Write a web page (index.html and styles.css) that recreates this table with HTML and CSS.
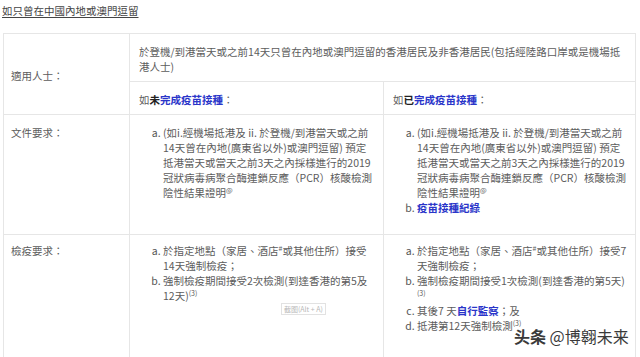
FILE: index.html
```html
<!DOCTYPE html>
<html lang="zh-Hant">
<head>
<meta charset="utf-8">
<link rel="stylesheet" href="styles.css">
</head>
<body>
<div class="page">
  <p class="title">如只曾在中國內地或澳門逗留</p>
  <table class="grid">
    <colgroup><col class="c1"><col class="c2"><col class="c3"></colgroup>
    <tr>
      <td class="label mid" rowspan="2">適用人士：</td>
      <td class="head" colspan="2">於登機/到港當天或之前14天只曾在內地或澳門逗留的香港居民及非香港居民(包括經陸路口岸或是機場抵<br>港人士)</td>
    </tr>
    <tr>
      <td class="head">如<b class="dark">未</b><span class="link">完成疫苗接種</span>：</td>
      <td class="head">如<b class="dark">已</b><span class="link">完成疫苗接種</span>：</td>
    </tr>
    <tr>
      <td class="label">文件要求：</td>
      <td class="body">
        <ol class="items">
          <li>(如i.經機場抵港及 ii. 於登機/到港當天或之前<br>14天曾在內地(廣東省以外)或澳門逗留) 預定<br>抵港當天或當天之前3天之內採樣進行的2019<br>冠狀病毒病聚合酶連鎖反應（PCR）核酸檢測<br>陰性結果證明<sup>@</sup></li>
        </ol>
      </td>
      <td class="body">
        <ol class="items">
          <li>(如i.經機場抵港及 ii. 於登機/到港當天或之前<br>14天曾在內地(廣東省以外)或澳門逗留) 預定<br>抵港當天或當天之前3天之內採樣進行的2019<br>冠狀病毒病聚合酶連鎖反應（PCR）核酸檢測<br>陰性結果證明<sup>@</sup></li>
          <li><span class="link">疫苗接種紀錄</span></li>
        </ol>
      </td>
    </tr>
    <tr>
      <td class="label low">檢疫要求：</td>
      <td class="body low">
        <ol class="items">
          <li>於指定地點（家居、酒店<sup>#</sup>或其他住所）接受<br>14天強制檢疫；</li>
          <li>強制檢疫期間接受2次檢測(到達香港的第5及<br>12天)<sup>(3)</sup></li>
        </ol>
      </td>
      <td class="body low">
        <ol class="items">
          <li>於指定地點（家居、酒店<sup>#</sup>或其他住所）接受7<br>天強制檢疫；</li>
          <li>強制檢疫期間接受1次檢測(到達香港的第5天)<br><sup>(3)</sup></li>
          <li>其後7 天<span class="link">自行監察</span>；及</li>
          <li>抵港第12天強制檢測<sup>(3)</sup></li>
        </ol>
      </td>
    </tr>
  </table>
  <div class="capture">截图(Alt + A)</div>
  <div class="mark"><span class="brand">头条</span> @博翱未来</div>
</div>
</body>
</html>
```

FILE: styles.css
```css
html, body {
  margin: 0;
  padding: 0;
  background: #ffffff;
}
body {
  font-family: "Noto Sans CJK TC", "Noto Sans", sans-serif;
  font-size: 10.5px;
  line-height: 15px;
  color: #5c5c5c;
  overflow: hidden;
}
.page {
  position: relative;
  width: 640px;
  height: 357px;
  padding: 3px 0 0 3px;
  box-sizing: border-box;
}
.title {
  margin: 0 0 15px -1px;
  color: #444;
  text-decoration: underline;
  text-underline-offset: 2px;
  line-height: 15px;
}
.grid {
  border-collapse: collapse;
  table-layout: fixed;
  width: 632px;
}
.c1 { width: 126px; }
.c2 { width: 254px; }
.c3 { width: 252px; }
.grid td {
  border: 1px solid #e6e6e6;
  vertical-align: top;
  padding: 10px 8px 8px 8px;
}
.grid td.label {
  padding-left: 7px;
}
.grid td.mid {
  vertical-align: middle;
}
.grid td.head {
  padding: 10px 8px 7px 9px;
}
.grid td.low {
  padding-top: 8px;
  height: 112px;
}
.dark {
  color: #222;
  font-weight: 700;
}
.link {
  color: #2a35c9;
  font-weight: 700;
}
.items {
  list-style: lower-alpha;
  margin: 0 0 11px 0;
  padding: 0 0 0 25px;
  white-space: nowrap;
}
.items li::marker {
  color: #555;
}
sup {
  font-size: 7px;
  line-height: 1;
  vertical-align: 4px;
}
.capture {
  position: absolute;
  left: 281px;
  top: 303px;
  padding: 0 2px;
  border: 1px solid #e2e2e2;
  font-size: 7px;
  line-height: 10px;
  color: #b8b8b8;
  background: #fff;
}
.mark {
  position: absolute;
  left: 514px;
  top: 325px;
  font-family: "Noto Sans CJK SC", sans-serif;
  font-size: 16px;
  line-height: 22px;
  color: #3a3a3a;
  text-shadow: 0 0 2px #fff, 0 0 2px #fff, 0 0 3px #fff;
  white-space: nowrap;
}
.brand {
  font-weight: 700;
}
```
